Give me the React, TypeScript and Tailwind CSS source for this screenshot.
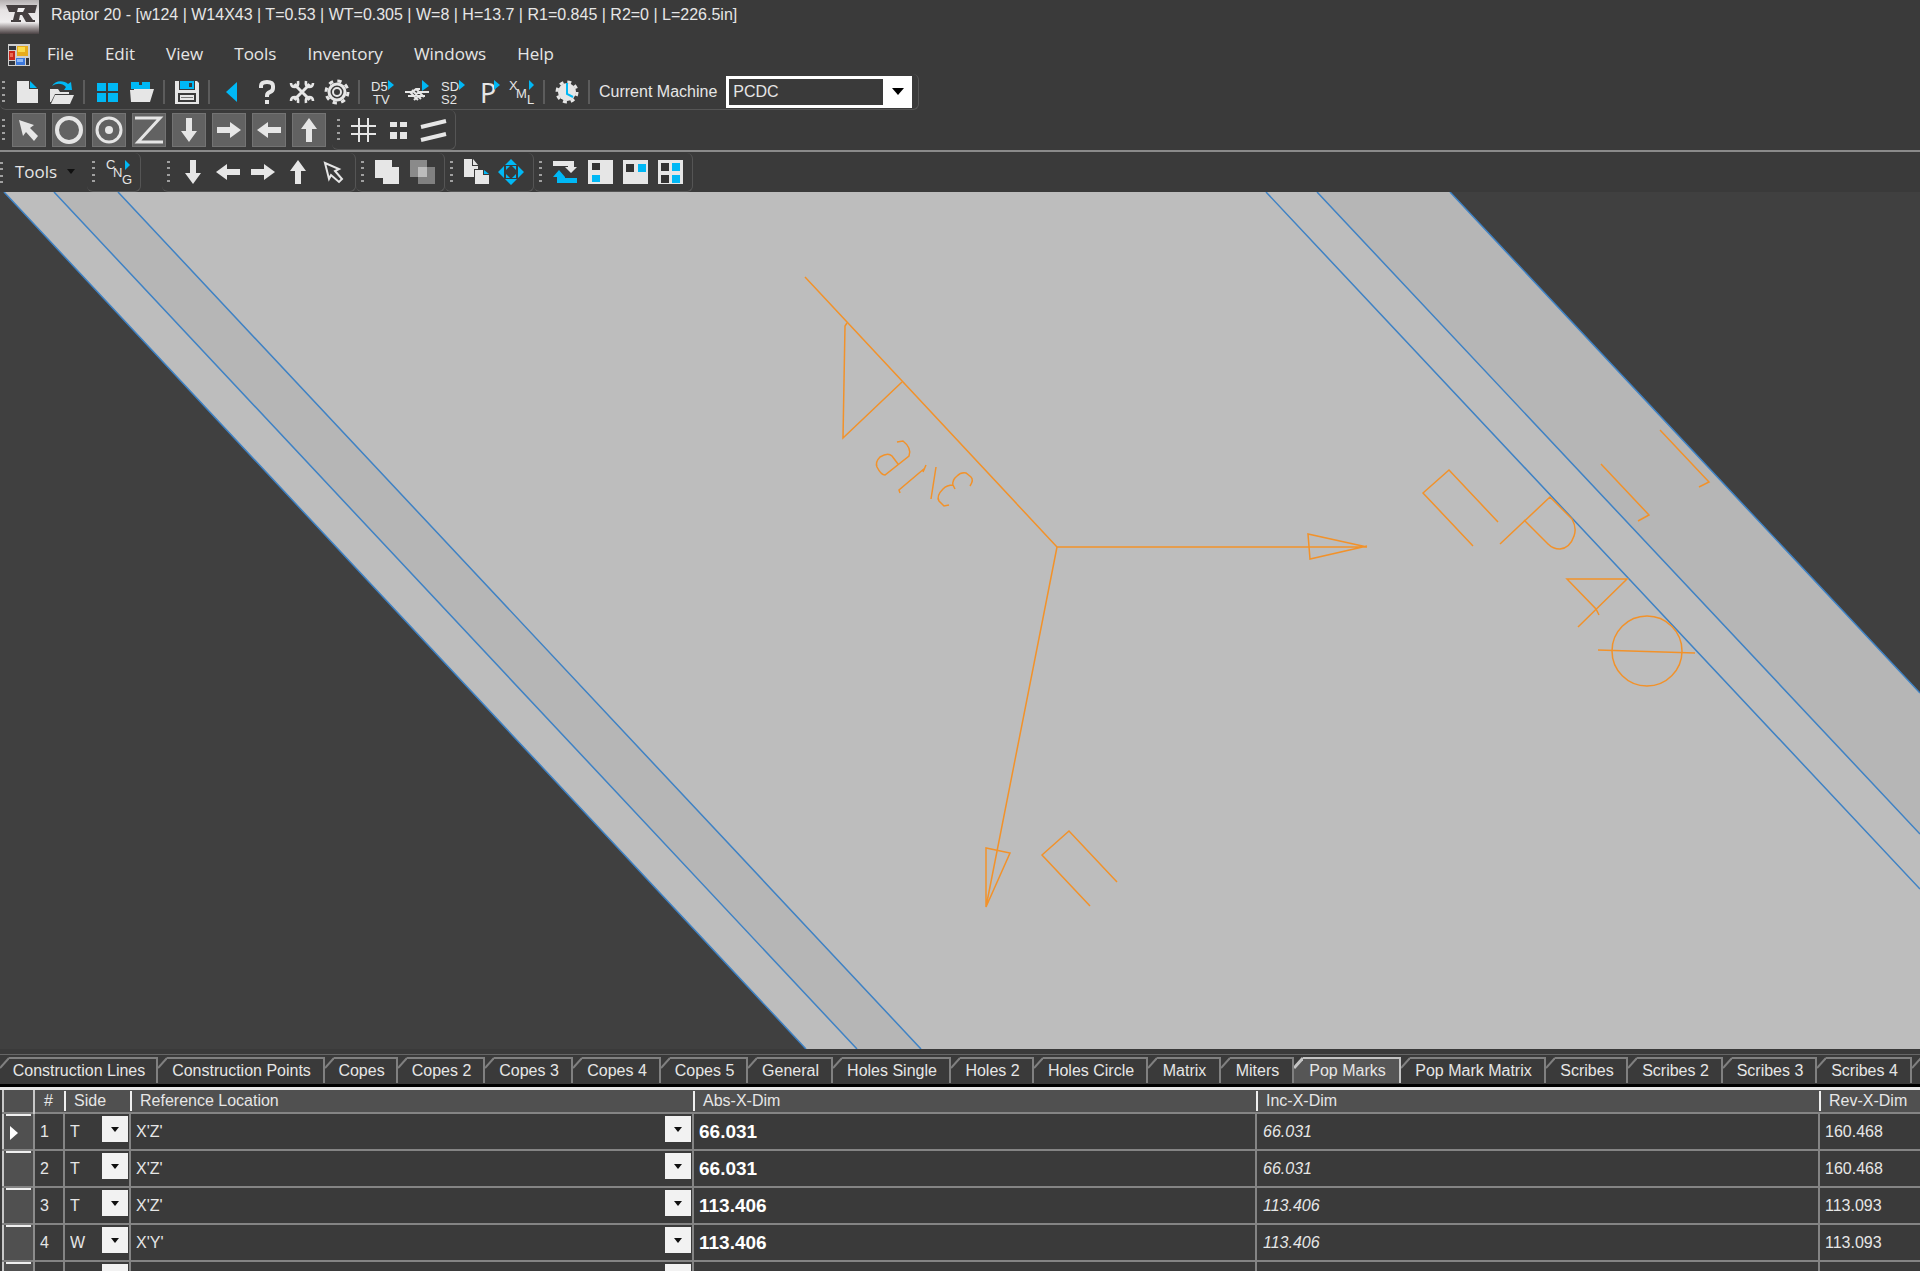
import { useState, type ReactNode } from 'react';
import clsx from 'clsx';

const FG = '#e6e6e6';
const CYAN = '#00b8f5';

const menus = ['File', 'Edit', 'View', 'Tools', 'Inventory', 'Windows', 'Help'];

const tabs = [
  { name: 'Construction Lines', width: 'w-[158px]' },
  { name: 'Construction Points', width: 'w-[167px]' },
  { name: 'Copes', width: 'w-[73px]' },
  { name: 'Copes 2', width: 'w-[87px]' },
  { name: 'Copes 3', width: 'w-[88px]' },
  { name: 'Copes 4', width: 'w-[88px]' },
  { name: 'Copes 5', width: 'w-[87px]' },
  { name: 'General', width: 'w-[85px]' },
  { name: 'Holes Single', width: 'w-[118px]' },
  { name: 'Holes 2', width: 'w-[83px]' },
  { name: 'Holes Circle', width: 'w-[114px]' },
  { name: 'Matrix', width: 'w-[73px]' },
  { name: 'Miters', width: 'w-[73px]' },
  { name: 'Pop Marks', width: 'w-[107px]' },
  { name: 'Pop Mark Matrix', width: 'w-[145px]' },
  { name: 'Scribes', width: 'w-[82px]' },
  { name: 'Scribes 2', width: 'w-[95px]' },
  { name: 'Scribes 3', width: 'w-[94px]' },
  { name: 'Scribes 4', width: 'w-[95px]' },
];

const rows = [
  { id: '1', side: 'T', ref: "X'Z'", abs: '66.031', inc: '66.031', rev: '160.468' },
  { id: '2', side: 'T', ref: "X'Z'", abs: '66.031', inc: '66.031', rev: '160.468' },
  { id: '3', side: 'T', ref: "X'Z'", abs: '113.406', inc: '113.406', rev: '113.093' },
  { id: '4', side: 'W', ref: "X'Y'", abs: '113.406', inc: '113.406', rev: '113.093' },
  { id: '', side: '', ref: '', abs: '', inc: '', rev: '' },
];

function Icon({ children }: { children: ReactNode }) {
  return (
    <svg width="26" height="26" viewBox="0 0 26 26" fill={FG} className="overflow-visible" aria-hidden="true">
      {children}
    </svg>
  );
}

function Tool({ label, boxed, children }: { label: string; boxed?: boolean; children: ReactNode }) {
  return (
    <button
      type="button"
      aria-label={label}
      className={clsx(
        'flex shrink-0 items-center justify-center',
        boxed ? 'h-[34px] w-[34px] border border-[#737373] bg-[#626262]' : 'h-[34px] w-[35px]'
      )}
    >
      <Icon>{children}</Icon>
    </button>
  );
}

function Grip() {
  return (
    <svg width="4" height="24" viewBox="0 0 4 24" fill="#a0a0a0" className="shrink-0" aria-hidden="true">
      <path d="M0 1h3v2H0zM0 7h3v2H0zM0 14h3v2H0zM0 20h3v2H0z" />
    </svg>
  );
}

function Group({ children }: { children: ReactNode }) {
  return (
    <div className="flex h-full items-center rounded-md border-r border-b border-[#555] pr-[5px]">
      <div className="flex w-[13px] justify-center">
        <Grip />
      </div>
      {children}
    </div>
  );
}

function Sep() {
  return (
    <div className="flex w-[10px] justify-center">
      <div className="h-6 w-[2px] bg-[#5c5c5c]" />
    </div>
  );
}

const arrowDown = 'M10 1h6v13h5l-8 11l-8-11h5z';
const arrowUp = 'M10 25h6V12h5L13 1L5 12h5z';
const arrowRight = 'M1 10v6h13v5l11-8L14 5v5z';
const arrowLeft = 'M25 10v6H12v5L1 13l11-8v5z';

function AppLogo() {
  return (
    <svg width="39" height="34" viewBox="0 0 39 34" aria-hidden="true">
      <defs>
        <linearGradient id="metal" x1="0" y1="0" x2="0" y2="1">
          <stop offset="0" stopColor="#b5b0b1" />
          <stop offset="0.3" stopColor="#e6e3e4" />
          <stop offset="0.65" stopColor="#efedee" />
          <stop offset="0.85" stopColor="#8d8586" />
          <stop offset="1" stopColor="#4a4244" />
        </linearGradient>
      </defs>
      <rect width="39" height="34" fill="url(#metal)" />
      <path d="M6 5h31l-2 8h-7l5 7h2v2h-9l-4-7h-2l-1 5h2v2h-10v-2h2l2-8H9z" fill="#453f40" />
      <path d="M18 8h7l-2 4h-6z" fill="#f4f2f3" />
    </svg>
  );
}

function FormIcon() {
  return (
    <svg width="22" height="22" viewBox="0 0 22 22" aria-hidden="true">
      <rect width="22" height="22" fill="#cfcfcf" />
      <path d="M1 2h7v4H1zM1 17h6v4H1zM18 14h3v7h-3z" fill="#33363c" />
      <rect x="9" y="2" width="11" height="10" fill="#e8ac1c" />
      <rect x="10" y="3" width="7" height="5" fill="#fbdc4c" />
      <rect x="1" y="7" width="6" height="9" fill="#c8281c" />
      <rect x="2" y="9" width="3" height="4" fill="#ec6a55" />
      <rect x="8" y="14" width="9" height="7" fill="#3b78dd" />
      <rect x="9" y="15" width="6" height="3" fill="#8db7f5" />
    </svg>
  );
}

function MainToolbar() {
  return (
    <div className="flex h-9 w-fit items-center rounded-md border-r border-b border-[#555] pr-[6px]">
      <div className="flex w-[9px] pl-[2px]">
        <Grip />
      </div>
      <Tool label="New">
        <path d="M3 2h12v8h9v14H3z" />
        <path d="M16 2l7 7h-7z" fill={CYAN} />
      </Tool>
      <Tool label="Open">
        <path d="M1 10h8l2 3h9v2H6l-4 8H1z" />
        <path d="M6 16h19l-4 9H2z" />
        <path d="M3 7C6 1 15 1 19 5l3-2l1 8h-8l2-3C13 4 8 4 3 7z" fill={CYAN} />
      </Tool>
      <Sep />
      <Tool label="Tile">
        <path d="M3 4h9v8H3zM14 4h10v8H14zM3 14h9v9H3zM14 14h10v9H14z" fill={CYAN} />
      </Tool>
      <Tool label="Open group">
        <path d="M2 3h8v3h3V3h8v7H2z" fill={CYAN} />
        <path d="M1 11h4v-1h20l-4 13H2z" />
      </Tool>
      <Sep />
      <Tool label="Save">
        <path fillRule="evenodd" d="M1 2h22l2 2v21H1zM5 2v9h16V2zM4 14v9h18v-9z" />
        <path d="M6 2h14v8H6z" fill={CYAN} />
        <path d="M15 4h3v4h-3z" fill="#3a3a3a" />
        <path d="M6 16h14v5H6z" />
        <path d="M7 18h12v1H7z" fill="#777" />
      </Tool>
      <Sep />
      <Tool label="Back">
        <path d="M18 3v20L7 13z" fill={CYAN} />
      </Tool>
      <Tool label="Help">
        <path d="M7 9V7q0-4 6-4t6 4v2q0 3-3 4t-3 4v1" fill="none" stroke={FG} strokeWidth="4" />
        <path d="M11 21h4v4h-4z" />
      </Tool>
      <Tool label="Settings">
        <path d="M6 6l14 14M20 6L6 20" stroke={FG} strokeWidth="3" />
        <path
          d="M2 4q0 4 4 4t3-6M24 4q0 4-4 4t-3-6M2 22q0-4 4-4t3 6M24 22q0-4-4-4t-3 6"
          fill="none"
          stroke={FG}
          strokeWidth="2.6"
        />
        <path d="M4 6l3-2l2 4l-3 1zM22 6l-3-2l-2 4l3 1zM4 20l3 2l2-4l-3-1zM22 20l-3 2l-2-4l3-1z" />
      </Tool>
      <Tool label="Options">
        <circle cx="13" cy="13" r="8" fill="none" stroke={FG} strokeWidth="3" />
        <circle cx="13" cy="13" r="4" fill="none" stroke={FG} strokeWidth="2" />
        <circle cx="13" cy="13" r="11" fill="none" stroke={FG} strokeWidth="3" strokeDasharray="4.32 4.32" />
      </Tool>
      <Sep />
      <Tool label="DSTV">
        <text x="2" y="12" fontSize="13">D5</text>
        <text x="4" y="25" fontSize="13">TV</text>
        <path d="M19 1l6 5l-6 5z" fill={CYAN} />
      </Tool>
      <Tool label="Mesh">
        <path d="M1 13h7l4-3h4M4 17h6l5-4h10M10 21l4-4h7M8 11l9 9M12 10l8 8M6 13l8 8" fill="none" stroke={FG} strokeWidth="2" />
        <path d="M18 1l7 6l-7 5z" fill={CYAN} />
      </Tool>
      <Tool label="SDS2">
        <text x="2" y="12" fontSize="13">SD</text>
        <text x="2" y="25" fontSize="13">S2</text>
        <path d="M20 1l6 5l-6 5z" fill={CYAN} />
      </Tool>
      <Tool label="Plate">
        <text x="6" y="24" fontSize="27" fontFamily="'Noto Sans', sans-serif">P</text>
        <path d="M20 1l6 5l-6 5z" fill={CYAN} />
      </Tool>
      <Tool label="XML">
        <text x="0" y="11" fontSize="13">X</text>
        <text x="7" y="19" fontSize="13">M</text>
        <text x="18" y="25" fontSize="13">L</text>
        <path d="M20 1l5 5l-5 5z" fill={CYAN} />
      </Tool>
      <Sep />
      <Tool label="Schedule">
        <circle cx="13" cy="13" r="9" />
        <circle cx="13" cy="13" r="10" fill="none" stroke={FG} strokeWidth="3" strokeDasharray="3.93 3.93" />
        <path d="M13 4v11l6 3" fill="none" stroke={CYAN} strokeWidth="2" />
      </Tool>
      <Sep />
      <label htmlFor="machine" className="pr-[9px] pl-[5px] text-base leading-5">
        Current Machine
      </label>
      <div className="relative">
        <select
          id="machine"
          defaultValue="PCDC"
          className="h-8 w-[186px] appearance-none border-[3px] border-white bg-[#3a3a3a] pl-1 text-base leading-5 text-[#e6e6e6]"
        >
          <option>PCDC</option>
        </select>
        <span className="pointer-events-none absolute top-0 right-0 flex h-8 w-[29px] items-center justify-center bg-white">
          <svg width="12" height="7" viewBox="0 0 12 7" aria-hidden="true">
            <path d="M0 0h12L6 7z" />
          </svg>
        </span>
      </div>
    </div>
  );
}

function ShapeToolbar() {
  return (
    <div className="flex h-10 items-center">
      <div className="flex w-3 pl-[2px]">
        <Grip />
      </div>
      <div className="flex gap-[6px] pr-[6px]">
        <Tool boxed label="Select">
          <path d="M3 3l15 5l-4 3l8 8l-4 5l-8-9l-3 4z" />
        </Tool>
        <Tool boxed label="Hole">
          <circle cx="13" cy="13" r="12" fill="none" stroke={FG} strokeWidth="4" />
        </Tool>
        <Tool boxed label="Slot">
          <circle cx="13" cy="13" r="12" fill="none" stroke={FG} strokeWidth="3" />
          <circle cx="13" cy="13" r="4" />
        </Tool>
        <Tool boxed label="Cope">
          <path d="M-1 1h25L2 25h25" fill="none" stroke={FG} strokeWidth="3" />
        </Tool>
        <Tool boxed label="Down">
          <path d={arrowDown} />
        </Tool>
        <Tool boxed label="Right">
          <path d={arrowRight} />
        </Tool>
        <Tool boxed label="Left">
          <path d={arrowLeft} />
        </Tool>
        <Tool boxed label="Up">
          <path d={arrowUp} />
        </Tool>
      </div>
      <Group>
        <Tool label="Grid">
          <path d="M9 1v24M18 1v24M1 9h25M1 17h25" stroke={FG} strokeWidth="2" />
        </Tool>
        <Tool label="Points">
          <path d="M5 5h7v5H5zM15 5h7v5h-7zM5 15h7v7H5zM15 15h7v7h-7z" />
        </Tool>
        <Tool label="Parallel">
          <path d="M1 10l25-6M1 23l25-6" stroke={FG} strokeWidth="4" />
        </Tool>
      </Group>
    </div>
  );
}

function ViewToolbar() {
  return (
    <div className="flex h-[39px] items-center">
      <div className="flex w-[87px] items-center">
        <Grip />
        <button
          type="button"
          className="flex items-center gap-[10px] pb-[2px] pl-[11px] font-['Open_Sans',sans-serif] text-[17px] leading-5"
        >
          Tools
          <svg width="8" height="5" viewBox="0 0 8 5" aria-hidden="true">
            <path d="M0 0h8L4 5z" fill="#101010" />
          </svg>
        </button>
      </div>
      <Group>
        <Tool label="CNC">
          <text x="1" y="10" fontSize="13">C</text>
          <text x="8" y="18" fontSize="13">N</text>
          <text x="17" y="25" fontSize="13">G</text>
          <path d="M20 1l5 5l-5 5z" fill={CYAN} />
        </Tool>
      </Group>
      <div className="w-[21px]" />
      <Group>
        <Tool label="View down">
          <path d={arrowDown} />
        </Tool>
        <Tool label="View left">
          <path d={arrowLeft} />
        </Tool>
        <Tool label="View right">
          <path d={arrowRight} />
        </Tool>
        <Tool label="View up">
          <path d={arrowUp} />
        </Tool>
        <Tool label="Pick">
          <path d="M5 4l14 6l-4 2l7 8l-3 3l-8-7l-2 4z" fill="none" stroke={FG} strokeWidth="2" />
        </Tool>
      </Group>
      <Group>
        <Tool label="Union">
          <path d="M1 1h17v7h7v17H9v-6H1z" />
        </Tool>
        <Tool label="Intersect">
          <path d="M1 1h17v17H1z" fill="#8a8a8a" />
          <path d="M9 8h17v17H9z" fill="#808080" />
          <path d="M9 8h9v10H9z" fill="#bcbcbc" />
        </Tool>
      </Group>
      <Group>
        <Tool label="Copy">
          <path d="M1 0h8v7h6v3h-4v8H1zM10 0l5 6h-5z" />
          <path d="M12 11h8v5h6v9H12z" />
          <path d="M21 11l5 4h-5z" fill={CYAN} />
        </Tool>
        <Tool label="Move">
          <path d="M13 0l6 6H7zM13 26l6-6H7zM0 13l6-6v12zM26 13l-6-6v12z" fill={CYAN} />
          <path d="M8 7h4L8 11zM18 7h-4l4 4zM8 19h4L8 15zM18 19h-4l4-4z" fill={CYAN} />
        </Tool>
      </Group>
      <Group>
        <Tool label="Swap">
          <path d="M1 2h21v6h3l-6 6l-6-6h3V7H1z" />
          <path d="M25 24H5v-6H1l6-7l6 7v1h12z" fill={CYAN} />
        </Tool>
        <Tool label="Layout left">
          <path d="M1 1h25v24H1z" />
          <path d="M5 4h8v7H5z" fill="#333" />
          <path d="M5 16h8v7H5z" fill={CYAN} />
        </Tool>
        <Tool label="Layout top">
          <path d="M1 1h25v24H1z" />
          <path d="M4 5h8v8H4z" fill="#333" />
          <path d="M16 5h8v8h-8z" fill={CYAN} />
        </Tool>
        <Tool label="Layout quad">
          <path d="M1 1h25v24H1z" />
          <path d="M4 4h8v8H4zM4 16h8v8H4z" fill="#333" />
          <path d="M15 4h8v8h-8zM15 16h8v8h-8z" fill={CYAN} />
        </Tool>
      </Group>
    </div>
  );
}

function ModelView() {
  return (
    <svg
      className="block min-h-0 w-full flex-1 bg-[#404040]"
      viewBox="0 192 1920 857"
      preserveAspectRatio="xMinYMin slice"
      role="img"
      aria-label="Beam model"
    >
      <path d="M4 192H1450L1920 693V1049H806z" fill="#bdbdbd" />
      <path d="M54 192H118L921 1049H857z" fill="#b6b6b6" />
      <path d="M1317 192H1450L1920 693V834z" fill="#b6b6b6" />
      <path
        d="M4 192L806 1049M54 192L857 1049M118 192L921 1049M1266 192L1920 889M1317 192L1920 834M1450 192L1920 693"
        fill="none"
        stroke="#3f82c4"
        strokeWidth="1.5"
      />
      <g fill="none" stroke="#f2922a" strokeWidth="1.5">
        {/* axes */}
        <path d="M805 277L1057 547H1367L1308 534L1310 559L1367 546M1057 547L986 907L986 848L1010 853L986 907" />
        <path d="M847 323L845 326L843 438L902 382" />
        {/* rotated layout marks */}
        <path d="M897 442L903 441Q912 448 909 456L885 475Q881 475 877 467Q875 462 880 457Q888 452 892 456L898 464" />
        <path d="M900 493L899 490L925 468M926 465L923 472M936 467L931 499" />
        <path d="M970 486Q974 480 971 477L966 473Q961 472 957 476Q952 480 953 485L955 489M953 485Q947 485 943 489Q936 496 939 501L944 506L949 505" />
        <path d="M1473 546L1423 493L1449 470L1498 522" />
        <path d="M1090 906L1042 855L1069 831L1117 882" />
        <path d="M1500 544L1550 497L1572 519Q1577 528 1574 536Q1570 548 1560 549Q1553 549 1548 544L1524 520" />
        <path d="M1578 627L1627 579H1567L1596 609L1599 615" />
        <path d="M1601 464L1649 515L1638 521M1660 430L1709 482L1699 487" />
        <circle cx="1647" cy="651" r="35" />
        <path d="M1598 650L1695 653" />
      </g>
    </svg>
  );
}

function TabCorner({ active }: { active?: boolean }) {
  return (
    <svg width="9" height="26" viewBox="0 0 9 26" className="shrink-0" aria-hidden="true">
      {active && <path d="M9 1L0 11V26H9z" fill="#565656" />}
      <path
        d="M9 1L0 11"
        fill="none"
        stroke={active ? '#c4c4c4' : '#808080'}
        strokeWidth={active ? 3 : 2}
      />
    </svg>
  );
}

function CellSelect({ label, value }: { label: string; value: string }) {
  return (
    <div className="relative h-[35px]">
      <select
        aria-label={label}
        defaultValue={value}
        className="h-full w-full appearance-none bg-transparent pl-[5px] text-base leading-5 text-[#e6e6e6]"
      >
        <option>{value}</option>
      </select>
      <span className="pointer-events-none absolute top-[2px] right-px flex h-[26px] w-[26px] items-center justify-center bg-[#f2f2f2]">
        <svg width="8" height="5" viewBox="0 0 8 5" aria-hidden="true">
          <path d="M0 0h8L4 5z" fill="#111" />
        </svg>
      </span>
    </div>
  );
}

function DataGrid() {
  const heads = ['#', 'Side', 'Reference Location', 'Abs-X-Dim', 'Inc-X-Dim', 'Rev-X-Dim'];
  return (
    <div className="h-[184px] overflow-hidden border-t-[3px] border-[#e8e8e8] pl-[2px]">
      <table className="w-full table-fixed border-collapse border-l-2 border-[#c8c8c8] text-left text-base leading-5">
        <colgroup>
          <col className="w-[31px]" />
          <col className="w-[30px]" />
          <col className="w-[66px]" />
          <col className="w-[563px]" />
          <col className="w-[563px]" />
          <col className="w-[563px]" />
          <col />
        </colgroup>
        <thead>
          <tr className="h-[23px] border-b-2 border-[#848484] bg-[#505050]">
            <td className="border-r-2 border-[#c8c8c8]" />
            {heads.map((head, i) => (
              <th key={head} scope="col" className="p-0 font-normal whitespace-nowrap">
                <div className="flex h-5 items-center">
                  {i > 0 && <span className="h-5 w-[2px] bg-[#eeeeee]" />}
                  <span className={i > 0 ? 'pl-2' : 'pl-[9px]'}>{head}</span>
                </div>
              </th>
            ))}
          </tr>
        </thead>
        <tbody>
          {rows.map((row, i) => (
            <tr key={i} className="h-[37px] border-b-2 border-[#848484]">
              <td className="border-r-2 border-[#8c8c8c] bg-[#505050] p-0">
                <div className="mx-[2px] flex h-[35px] items-center border-t-2 border-[#f0f0f0] pl-1">
                  {i === 0 && (
                    <svg width="8" height="14" viewBox="0 0 8 14" aria-hidden="true">
                      <path d="M0 0l8 7l-8 7z" fill="#fff" />
                    </svg>
                  )}
                </div>
              </td>
              <td className="border-r-2 border-[#848484] p-0 pl-[5px]">{row.id}</td>
              <td className="border-r-2 border-[#848484] p-0">
                <CellSelect label="Side" value={row.side} />
              </td>
              <td className="border-r-2 border-[#848484] p-0">
                <CellSelect label="Reference location" value={row.ref} />
              </td>
              <td className="border-r-2 border-[#848484] p-0 pl-[5px] text-[19px] leading-5 font-bold text-white">
                {row.abs}
              </td>
              <td className="border-r-2 border-[#848484] p-0 pl-[6px] italic">{row.inc}</td>
              <td className="p-0 pl-[5px]">{row.rev}</td>
            </tr>
          ))}
        </tbody>
      </table>
    </div>
  );
}

export default function App() {
  const [active, setActive] = useState('Pop Marks');

  return (
    <div className="flex h-screen flex-col overflow-hidden bg-[#3a3a3a] font-['Liberation_Sans',Arial,sans-serif] text-base text-[#e6e6e6]">
      <header className="shrink-0">
        <div className="flex h-9 items-start gap-3">
          <AppLogo />
          <h1 className="pt-[5px] text-base leading-5">
            Raptor 20 - [w124 | W14X43 | T=0.53 | WT=0.305 | W=8 | H=13.7 | R1=0.845 | R2=0 | L=226.5in]
          </h1>
        </div>
        <nav className="flex h-[38px] items-center gap-[31px] pl-2 font-['Open_Sans',sans-serif] text-[17px] leading-5">
          <div className="-mr-[14px]">
            <FormIcon />
          </div>
          {menus.map((menu) => (
            <button key={menu} type="button" className="pb-[2px]">
              {menu}
            </button>
          ))}
        </nav>
        <MainToolbar />
        <ShapeToolbar />
        <div className="h-[3px] border-t-2 border-[#8a8a8a]" />
        <ViewToolbar />
      </header>

      <ModelView />

      <section className="shrink-0 pt-[5px]">
        <div
          role="tablist"
          className="flex h-[33px] items-start overflow-hidden border-t border-b-[3px] border-t-[#666] border-b-black pt-[2px]"
        >
          {tabs.map((tab) => {
            const on = tab.name === active;
            return (
              <button
                key={tab.name}
                type="button"
                role="tab"
                aria-selected={on}
                onClick={() => setActive(tab.name)}
                className={clsx('flex h-[26px] shrink-0 text-base leading-5', tab.width)}
              >
                <TabCorner active={on} />
                <span
                  className={clsx(
                    'flex h-full flex-1 items-center justify-center border-t-2 border-r-2 pr-[7px] whitespace-nowrap',
                    on ? 'border-[#c4c4c4] bg-[#565656]' : 'border-[#808080]'
                  )}
                >
                  {tab.name}
                </span>
              </button>
            );
          })}
          <button type="button" role="tab" aria-label="More tabs" className="flex h-[26px] flex-1">
            <TabCorner />
          </button>
        </div>
        <DataGrid />
      </section>
    </div>
  );
}
